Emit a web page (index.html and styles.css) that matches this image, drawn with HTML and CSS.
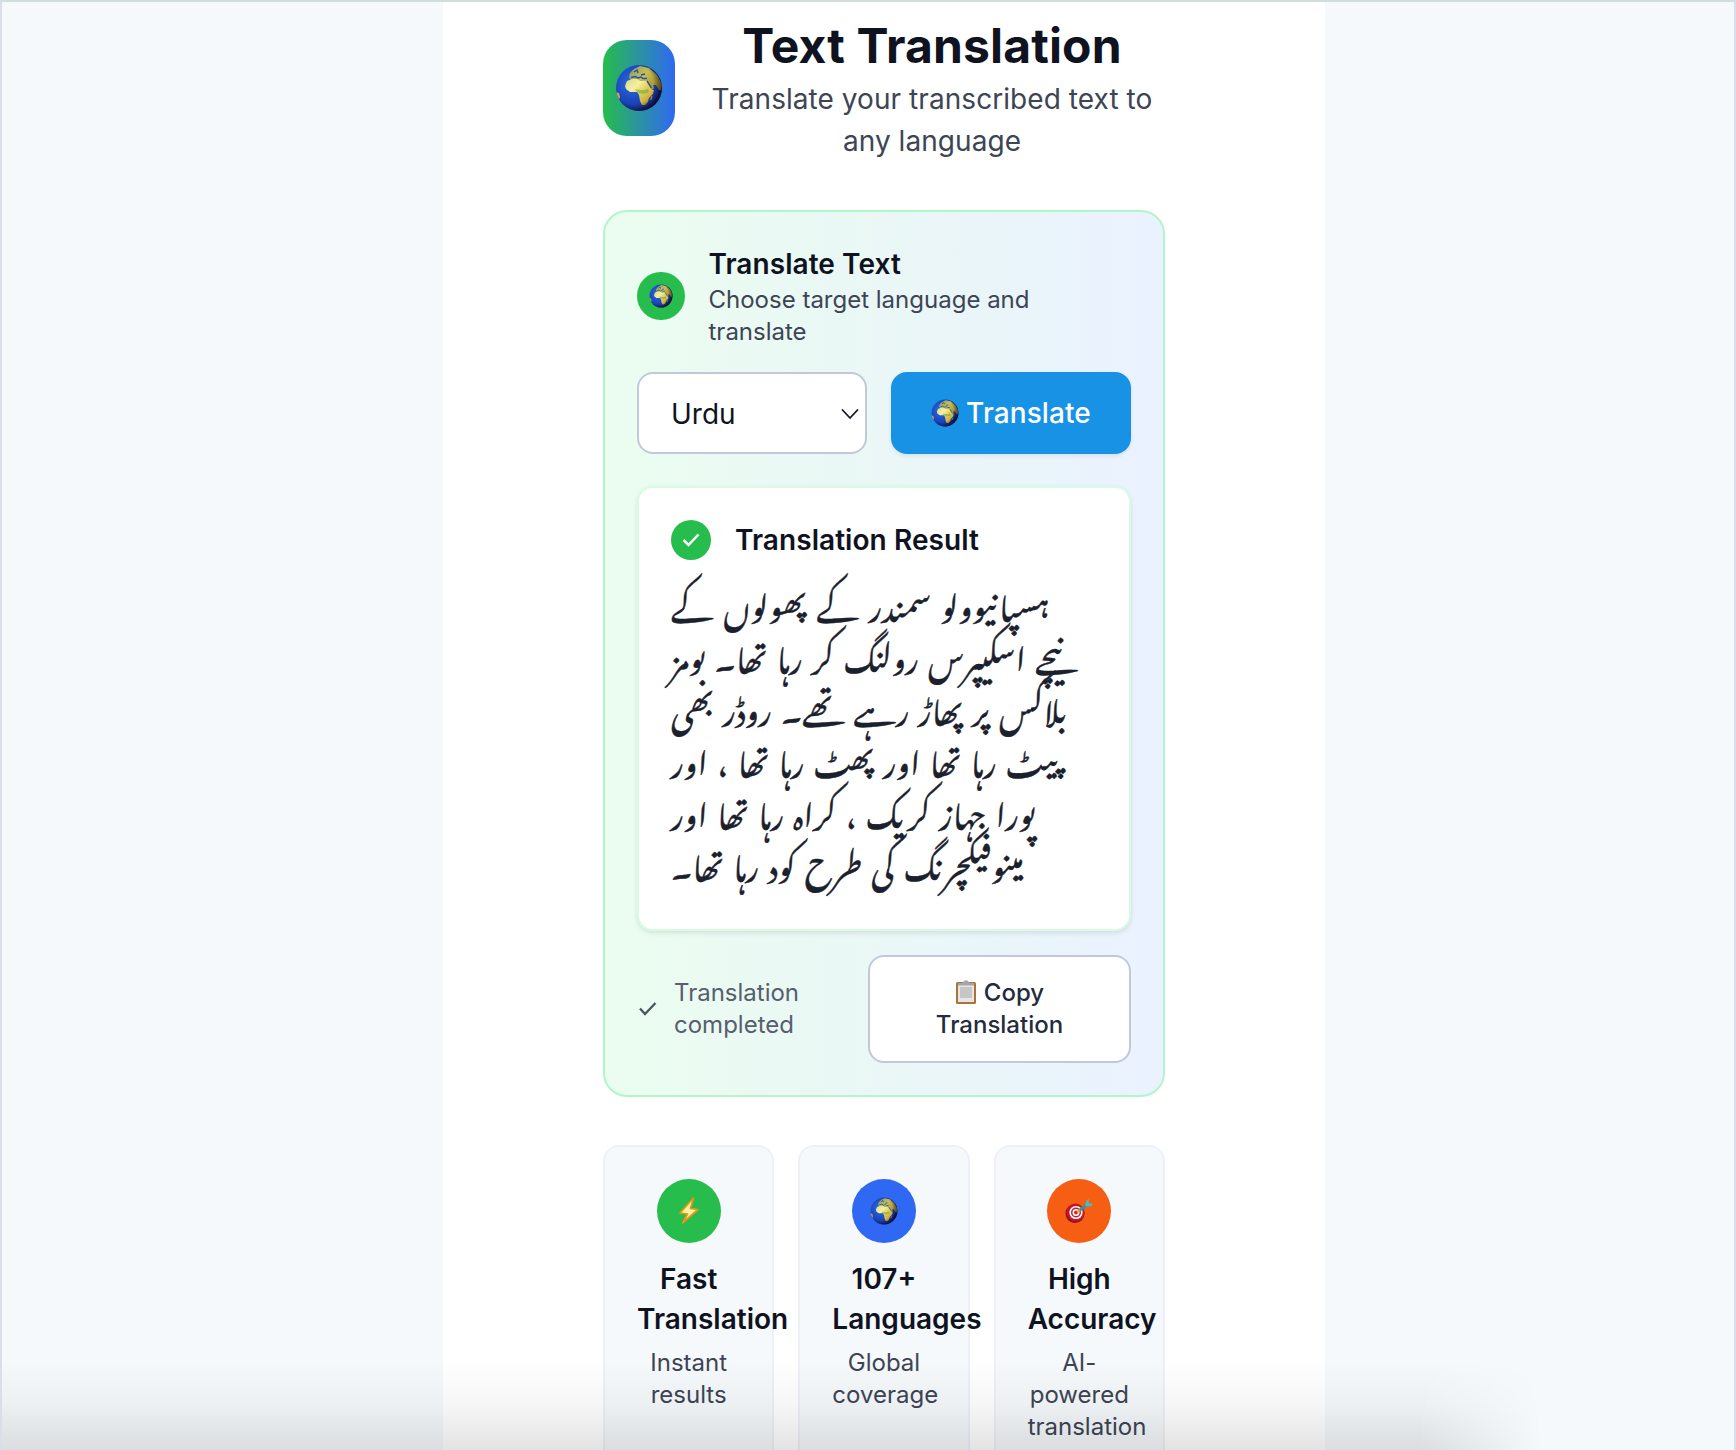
FILE: index.html
```html
<!DOCTYPE html>
<html lang="en">
<head>
<meta charset="utf-8">
<title>Text Translation</title>
<link rel="stylesheet" href="styles.css">
</head>
<body>
<svg class="defs" width="0" height="0" aria-hidden="true">
  <defs>
    <radialGradient id="sea" cx=".36" cy=".4" r=".66"><stop offset="0" stop-color="#2f6fd8"/><stop offset=".55" stop-color="#1c49c4"/><stop offset=".85" stop-color="#1a389f"/><stop offset="1" stop-color="#0d1750"/></radialGradient>
    <linearGradient id="land" x1="0" y1="0" x2="1" y2=".9"><stop offset="0" stop-color="#d5da8c"/><stop offset=".35" stop-color="#f6f0a0"/><stop offset=".6" stop-color="#dccd55"/><stop offset="1" stop-color="#c0942c"/></linearGradient>
    <linearGradient id="north" x1="0" y1="0" x2="1" y2=".6"><stop offset="0" stop-color="#7f9a6a"/><stop offset=".5" stop-color="#c9bf55"/><stop offset="1" stop-color="#a38f2e"/></linearGradient>
    <radialGradient id="shade" cx=".38" cy=".42" r=".62"><stop offset=".7" stop-color="#000" stop-opacity="0"/><stop offset="1" stop-color="#00061c" stop-opacity=".55"/></radialGradient>
    <clipPath id="disc"><circle cx="24" cy="24" r="23"/></clipPath>
    <symbol id="globe" viewBox="0 0 48 48">
      <circle cx="24" cy="24" r="23" fill="url(#sea)"/>
      <g clip-path="url(#disc)">
        <path d="M14 13l1-4 4-4 6-3 9 2 8 7 5 9-1 6-2 0-3-5-3 0 1 3-3 3-3-4-2-5-4-1-4-1-4 0-3 0z" fill="url(#north)"/>
        <path d="M12 17l5-2 5 0 4 2 6 0 3 5 2 4 2 0-1 4-4 4-1 4-3 3-3 0-2-4-1-6-2-3-7 0-4-3-1-3z" fill="url(#land)"/>
        <path d="M0 28l4 1 1 4-2 5-4-3zM36.500 32l1 0-1 4-1.500-.5z" fill="#d2a936"/>
        <path d="M16 13.500l4-1 3 1.500 3-1 2 1.500 4 0M19 8l3-2 1 3M26 11l4-1M32 17l4.500 7" fill="none" stroke="#2450ae" stroke-width="1.400"/>
        <path d="M20 25c4 1 8 2 13 0l1 3c-3 2-8 2-11 1z" fill="#71a043" opacity=".55"/>
      </g>
      <circle cx="24" cy="24" r="23" fill="url(#shade)"/>
    </symbol>
  </defs>
</svg>
<main class="column">
  <header class="header">
    <div class="logo"><svg width="48" height="48"><use href="#globe"/></svg></div>
    <div class="heading">
      <h1>Text Translation</h1>
      <p>Translate your transcribed text to any language</p>
    </div>
  </header>

  <section class="panel">
    <div class="panel-head">
      <div class="badge"><svg width="24" height="24"><use href="#globe"/></svg></div>
      <div>
        <h2>Translate Text</h2>
        <p class="small">Choose target language and translate</p>
      </div>
    </div>
    <div class="controls">
      <div class="select" role="combobox"><span>Urdu</span>
        <svg width="18" height="12" viewBox="0 0 18 12"><path d="M1.500 2l7.500 8 7.500-8" fill="none" stroke="#111827" stroke-width="1.800" stroke-linecap="round" stroke-linejoin="round"/></svg>
      </div>
      <button class="primary"><svg width="28" height="28"><use href="#globe"/></svg>Translate</button>
    </div>
    <article class="result">
      <div class="result-head">
        <div class="check"><svg width="20" height="16" viewBox="0 0 20 16"><path d="M2.500 8l5 5L17.500 2.500" fill="none" stroke="#fff" stroke-width="2.500"/></svg></div>
        <h2>Translation Result</h2>
      </div>
      <p class="urdu" lang="ur"><span class="first">ہسپانیوولو سمندر کے پھولوں کے</span><span>نیچے اسکیپرس رولنگ کر رہا تھا۔ بومز</span><span>بلاکس پر پھاڑ رہے تھے۔ روڈر بھی</span><span>پیٹ رہا تھا اور پھٹ رہا تھا ، اور</span><span>پورا جہاز کریک ، کراہ رہا تھا اور</span><span>مینوفیکچرنگ کی طرح کود رہا تھا۔</span></p>
    </article>
    <div class="footer">
      <div class="status"><svg width="22" height="16" viewBox="0 0 22 16"><path d="M3 7.500l5 5.500L18.500 2" fill="none" stroke="#4b5563" stroke-width="2.300"/></svg><span>Translation completed</span></div>
      <button class="copy"><svg width="22" height="26" viewBox="0 0 22 26"><rect x="1" y="3" width="20" height="22" rx="1.500" fill="#a87536"/><path d="M3 5h16v18H3z" fill="#e6e6e6"/><path d="M5 8h12v11H5z" fill="#c6c6c6"/><path d="M3 4h4.500l2-2.500h3l2 2.500H19v2.500H3z" fill="#a3a6aa"/></svg>Copy Translation</button>
    </div>
  </section>

  <section class="features">
    <div class="card">
      <div class="dot green"><svg width="22" height="30" viewBox="0 0 22 30"><path d="M15.500 2L2 17l7.500 1L4.500 27 20 13.500l-7.500-1z" fill="#fff3a0" stroke="#e8941a" stroke-width="1.700" stroke-linejoin="round"/></svg></div>
      <h3>Fast Translation</h3><p class="small">Instant results</p>
    </div>
    <div class="card">
      <div class="dot blue"><svg width="28" height="28"><use href="#globe"/></svg></div>
      <h3>107+ Languages</h3><p class="small">Global coverage</p>
    </div>
    <div class="card">
      <div class="dot orange"><svg width="28" height="26" viewBox="0 0 28 26"><circle cx="10" cy="15.500" r="9.500" fill="#8f0e18"/><circle cx="10.500" cy="14.500" r="9" fill="#c4162a"/><circle cx="11" cy="14.500" r="6.600" fill="#fff"/><circle cx="11" cy="14.500" r="5" fill="#c81e2a"/><circle cx="11" cy="14.500" r="3.500" fill="#fff"/><circle cx="11" cy="14.500" r="1.900" fill="#c81e2a"/><path d="M12 14.500l4-4" stroke="#d9a52c" stroke-width="2"/><path d="M15 12L23 6" stroke="#2c9aa3" stroke-width="3"/><path d="M20 8l1.500-5.500L24 1l-.5 4L28 6l-2 2.500z" fill="#49bcc4"/></svg></div>
      <h3>High Accuracy</h3><p class="small">AI-powered translation</p>
    </div>
  </section>
</main>
<div class="shadow"></div>
</body>
</html>
```
FILE: styles.css
```css
* { box-sizing: border-box; }
html, body { height: 100%; }
body {
  margin: 0;
  height: 1450px;
  overflow: hidden;
  position: relative;
  background: #f6f9fc;
  border: 2px solid #d8dfe8;
  border-top-color: #d1dddd;
  border-bottom: 0;
  font-family: Inter, "Liberation Sans", sans-serif;
  font-size: 28px;
  color: #0f131f;
}
h1, h2, h3, p { margin: 0; }
svg { display: block; flex: none; }
.defs { position: absolute; }
.column {
  width: 882px;
  height: 1448px;
  margin-left: 441px;
  padding: 16px 160px 0;
  background: #fff;
}
.header { display: flex; align-items: center; gap: 24px; height: 140px; }
.logo {
  width: 72px; height: 96px; flex: none;
  border-radius: 24px;
  display: grid; place-items: center;
  background: linear-gradient(90deg, #26bd4d, #2f69f2);
}
.heading { flex: 1; padding-top: 4px; text-align: center; }
h1 { font-size: 48px; line-height: 56px; font-weight: 700; letter-spacing: 0.15px; }
.heading p { margin-top: 4px; line-height: 42px; letter-spacing: 0.06px; color: #3d4554; }
.panel {
  margin-top: 52px;
  height: 887px;
  padding: 32px;
  border: 2px solid #b1f6c7;
  border-radius: 24px;
  background: linear-gradient(90deg, #ebfdf0, #eaf7f6 50%, #eaf2ff);
}
.panel-head { display: flex; align-items: center; gap: 24px; height: 104px; }
.badge {
  width: 47.5px; height: 48px; flex: none; border-radius: 50%;
  display: grid; place-items: center; background: #26bd4d;
}
h2 { font-size: 28px; line-height: 40px; font-weight: 600; letter-spacing: 0.06px; }
.small { font-size: 24px; line-height: 32px; color: #3d4554; }
.controls { display: flex; gap: 24px; margin-top: 24px; height: 82px; }
.select {
  width: 230px; padding: 1px 6px 0 32px;
  display: flex; align-items: center; justify-content: space-between;
  border: 2px solid #c0c9dc; border-radius: 16px; background: #fff;
}
button { font-family: inherit; border: 0; margin: 0; }
.primary {
  flex: 1; display: flex; align-items: center; justify-content: center; gap: 7px;
  border-radius: 16px; background: #1792e4; color: #fff;
  font-size: 28px; font-weight: 500; letter-spacing: 0.1px;
  box-shadow: 0 2px 4px rgba(0, 0, 0, .08);
}
.result {
  margin-top: 32px; height: 445px; padding: 32px;
  border: 2px solid #d7fce2; border-radius: 16px; background: #fff;
  box-shadow: 0 2px 5px rgba(0, 0, 0, .1);
}
.result-head { display: flex; align-items: center; gap: 24px; }
.check {
  width: 40px; height: 40px; border-radius: 50%;
  display: grid; place-items: center; background: #26bd4d;
}
.urdu {
  margin-top: 15px;
  font-family: "Noto Nastaliq Urdu", "DejaVu Sans", sans-serif;
  font-size: 32px; word-spacing: 4.8px; color: #1a202c;
  -webkit-text-stroke: 0.4px #1a202c;
}
.urdu span { display: block; height: 52px; line-height: 52px; white-space: nowrap; }
.urdu .first { word-spacing: 5.5px; }
.footer { display: flex; align-items: center; justify-content: space-between; margin-top: 24px; }
.status {
  width: 190px; display: flex; align-items: center; gap: 15px;
  font-size: 24px; line-height: 32px; color: #575e6d;
}
.copy {
  width: 263px; height: 108px; padding: 0 40px;
  border: 2px solid #c0c9dc; border-radius: 16px; background: #fff;
  font-size: 24px; line-height: 32px; font-weight: 500; color: #232c3c;
}
.copy svg { display: inline-block; vertical-align: -4px; margin-right: 7px; }
.features { display: grid; grid-template-columns: repeat(3, minmax(0, 1fr)); gap: 24px; margin-top: 48px; }
.card {
  height: 330px; padding: 32px;
  border: 2px solid #edf1f7; border-radius: 16px; background: #f6f9fc;
  text-align: center;
}
.dot { width: 64px; height: 64px; margin: 0 auto 16px; border-radius: 50%; display: grid; place-items: center; }
.green { background: #26bd4d; }
.blue { background: #2f69f3; }
.orange { background: #f65e14; }
h3 { font-size: 28px; line-height: 40px; font-weight: 600; }
.card .small { margin-top: 8px; }
.shadow {
  position: absolute; left: 0; bottom: 0; width: 1540px; height: 90px;
  background: linear-gradient(180deg, rgba(0, 0, 0, 0), rgba(0, 0, 0, .035) 50%, rgba(0, 0, 0, .11));
  -webkit-mask-image: linear-gradient(90deg, #000 92%, transparent);
  mask-image: linear-gradient(90deg, #000 92%, transparent);
}
```
